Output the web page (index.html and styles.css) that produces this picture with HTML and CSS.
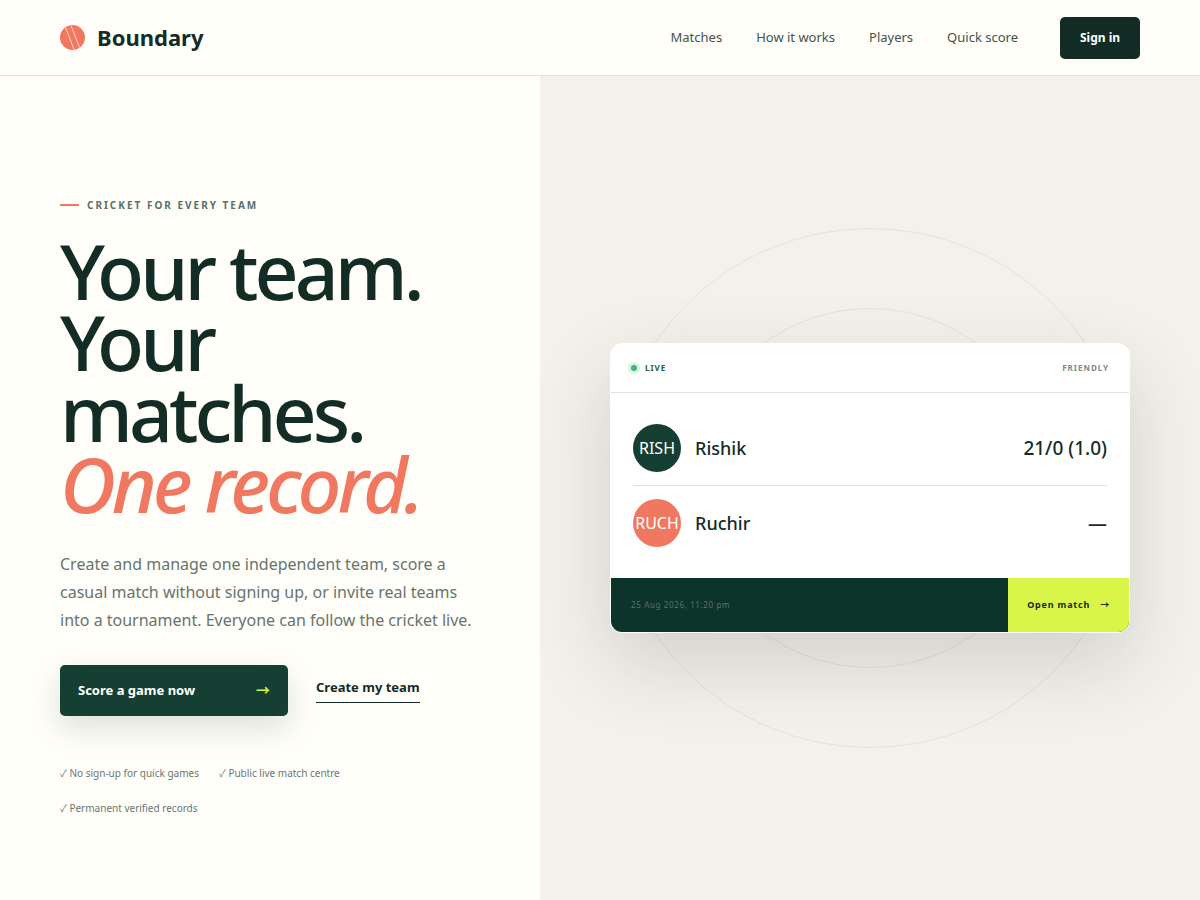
FILE: index.html
```html
<!DOCTYPE html>
<html lang="en">
<head>
<meta charset="utf-8">
<meta name="viewport" content="width=device-width, initial-scale=1">
<title>Boundary</title>
<link rel="stylesheet" href="styles.css">
</head>
<body>
<header class="site-header">
  <a class="brand" href="#">
    <svg class="brand-mark" viewBox="0 0 25 25" aria-hidden="true">
      <circle cx="12.5" cy="12.5" r="12.5" fill="#f07860"/>
      <path d="M5.5 2.5 14 24.5M11 0.5 19.5 22.5" stroke="#fbd3c8" stroke-width="1" fill="none"/>
    </svg>
    <span>Boundary</span>
  </a>
  <nav class="site-nav">
    <a href="#">Matches</a>
    <a href="#">How it works</a>
    <a href="#">Players</a>
    <a href="#">Quick score</a>
    <button class="sign-in" type="button">Sign in</button>
  </nav>
</header>
<main class="hero">
  <section class="hero-copy">
    <p class="eyebrow">Cricket for every team</p>
    <h1 class="headline">Your team.<br>Your matches.<br><em>One record.</em></h1>
    <p class="intro">Create and manage one independent team, score a casual match without signing up, or invite real teams into a tournament. Everyone can follow the cricket live.</p>
    <div class="actions">
      <a class="primary" href="#"><span>Score a game now</span><span class="arrow">→</span></a>
      <a class="secondary" href="#">Create my team</a>
    </div>
    <ul class="perks">
      <li>✓ No sign-up for quick games</li>
      <li>✓ Public live match centre</li>
      <li>✓ Permanent verified records</li>
    </ul>
  </section>
  <section class="hero-visual">
    <article class="match-card">
      <header class="card-head">
        <span class="live">Live</span>
        <span class="kind">Friendly</span>
      </header>
      <div class="teams">
        <div class="team">
          <span class="avatar">RISH</span>
          <span class="team-name">Rishik</span>
          <span class="score">21/0 (1.0)</span>
        </div>
        <div class="team">
          <span class="avatar coral">RUCH</span>
          <span class="team-name">Ruchir</span>
          <span class="score">—</span>
        </div>
      </div>
      <footer class="card-foot">
        <time>25 Aug 2026, 11:20 pm</time>
        <a class="open" href="#"><span>Open match</span><span>→</span></a>
      </footer>
    </article>
  </section>
</main>
</body>
</html>
```

FILE: styles.css
```css
*,
*::before,
*::after { box-sizing: border-box; }

body {
  margin: 0;
  background: #fffef9;
  color: #132c25;
  font-family: "Noto Sans", "Noto Sans CJK SC", sans-serif;
}

a { color: inherit; text-decoration: none; }
p, h1, ul { margin: 0; padding: 0; }

.site-header {
  display: flex;
  align-items: center;
  justify-content: space-between;
  height: 76px;
  padding: 0 5%;
  border-bottom: 1px solid #dfe2dc;
}

.brand {
  display: flex;
  align-items: center;
  gap: 12px;
  font-size: 22px;
  line-height: 27px;
  font-weight: 700;
}
.brand-mark { width: 25px; height: 25px; }

.site-nav {
  display: flex;
  align-items: center;
  gap: 34px;
  font-size: 13px;
  line-height: 19px;
  color: #40544d;
}

.sign-in {
  height: 42px;
  margin-left: 8px;
  padding: 0 19px;
  min-width: 80px;
  border: 0;
  border-radius: 5px;
  background: #132c25;
  color: #fff;
  font: 700 12px "Noto Sans", sans-serif;
}

.hero {
  display: grid;
  grid-template-columns: 9fr 11fr;
  min-height: calc(100vh - 76px);
}

.hero-copy {
  display: flex;
  flex-direction: column;
  justify-content: center;
  padding: 68px 60px 32px 60px;
}

.eyebrow {
  display: flex;
  align-items: center;
  gap: 8px;
  margin-bottom: 22px;
  font-size: 10px;
  line-height: 16px;
  font-weight: 700;
  letter-spacing: 2px;
  text-transform: uppercase;
  color: #58706a;
}
.eyebrow::before {
  content: "";
  width: 19px;
  height: 2px;
  background: #f07860;
}

.headline {
  font-size: 77px;
  line-height: 71px;
  font-weight: 500;
  letter-spacing: -4px;
}
.headline em { color: #f07860; }

.intro {
  margin-top: 31px;
  font-size: 16px;
  line-height: 28px;
  color: #66756f;
}

.actions {
  display: flex;
  align-items: center;
  gap: 28px;
  margin-top: 31px;
  font-size: 13px;
  line-height: 18px;
  font-weight: 700;
}
.primary {
  display: flex;
  align-items: center;
  justify-content: space-between;
  width: 228px;
  height: 51px;
  padding: 0 18px;
  border-radius: 5px;
  background: #153f33;
  color: #fff;
  box-shadow: 0 12px 30px rgba(19, 44, 37, 0.14);
}
.arrow { font-size: 14px; color: #d8f548; }
.secondary {
  padding-bottom: 6px;
  border-bottom: 1px solid #132c25;
}

.perks {
  display: flex;
  flex-wrap: wrap;
  gap: 20px;
  margin-top: 50px;
  font-size: 10px;
  line-height: 15px;
  color: #697871;
  list-style: none;
}

.hero-visual {
  position: relative;
  display: grid;
  place-items: center;
  overflow: hidden;
  padding: 40px 70px;
  background: #f4f1ea;
}
.hero-visual::before,
.hero-visual::after {
  content: "";
  position: absolute;
  top: 50%;
  left: 50%;
  width: 520px;
  height: 520px;
  border: 1px solid #e5e2da;
  border-radius: 50%;
  transform: translate(-50%, -50%);
}
.hero-visual::after { width: 360px; height: 360px; }

.match-card {
  position: relative;
  z-index: 1;
  width: 100%;
  max-width: 520px;
  overflow: hidden;
  border: 1px solid #fff;
  border-radius: 12px;
  background: #fff;
  box-shadow: 0 30px 80px rgba(19, 44, 37, 0.16);
}

.card-head {
  display: flex;
  align-items: center;
  justify-content: space-between;
  height: 49px;
  padding: 0 20px;
  border-bottom: 1px solid #dfe3e0;
  font-size: 8px;
  line-height: 10px;
  font-weight: 700;
  letter-spacing: 1px;
  text-transform: uppercase;
}
.live {
  display: flex;
  align-items: center;
  gap: 8px;
  color: #285847;
}
.live::before {
  content: "";
  width: 6px;
  height: 6px;
  border-radius: 50%;
  background: #44b374;
  box-shadow: 0 0 0 3px #daf4e3;
}
.kind { color: #7d8984; }

.teams { padding: 18px 22px; }
.team {
  display: flex;
  align-items: center;
  gap: 14px;
  height: 74px;
  font-size: 18px;
  line-height: 24px;
  font-weight: 500;
}
.team:first-child {
  height: 75px;
  border-bottom: 1px solid #dfe3e0;
}
.avatar {
  display: grid;
  place-items: center;
  width: 48px;
  height: 48px;
  border-radius: 50%;
  background: #153f33;
  color: #fff;
  font-size: 16px;
  font-weight: 400;
}
.avatar.coral { background: #f07860; }
.score { margin-left: auto; font-size: 19px; }

.card-foot {
  display: flex;
  align-items: stretch;
  justify-content: space-between;
  height: 54px;
  background: #0d342a;
  line-height: 12px;
}
.card-foot time {
  align-self: center;
  padding-left: 20px;
  font-size: 8px;
  letter-spacing: 0.08em;
  color: #58736a;
}
.open {
  display: flex;
  align-items: center;
  gap: 10px;
  padding: 0 19px;
  background: #d8f548;
  font-size: 9px;
  font-weight: 700;
  letter-spacing: 0.09em;
}
```
